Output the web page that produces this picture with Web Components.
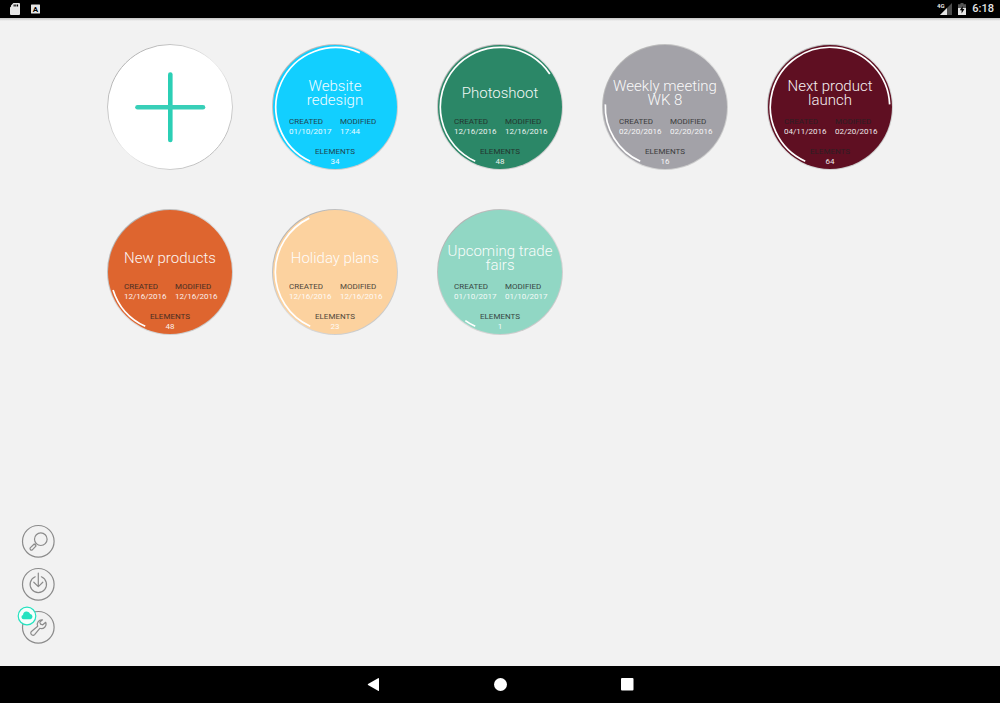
<!DOCTYPE html>
<html lang="en">
<head>
<meta charset="utf-8">
<meta name="viewport" content="width=device-width, initial-scale=1">
<title>Boards</title>
<style>
    body {
        margin: 0;
        background: #f1f1f1;
        font-family: Roboto, sans-serif;
    }
</style>
</head>
<body>
<board-app>
    <status-bar slot="status" time="6:18"></status-bar>
    <tool-bar slot="tools"></tool-bar>
    <add-board></add-board>
    <board-card color="#12cfff" arc="180" created="01/10/2017" modified="17:44" elements="34">Website redesign</board-card>
    <board-card color="#2b8767" arc="212" created="12/16/2016" modified="12/16/2016" elements="48">Photoshoot</board-card>
    <board-card color="#a3a2a8" arc="68" created="02/20/2016" modified="02/20/2016" elements="16">Weekly meeting WK 8</board-card>
    <board-card color="#5f0f22" arc="243" created="04/11/2016" modified="02/20/2016" elements="64">Next product launch</board-card>
    <board-card color="#de652f" arc="48" created="12/16/2016" modified="12/16/2016" elements="48">New products</board-card>
    <board-card color="#fcd29f" arc="130" created="12/16/2016" modified="12/16/2016" elements="23">Holiday plans</board-card>
    <board-card color="#91d7c4" arc="11" created="01/10/2017" modified="01/10/2017" elements="1">Upcoming trade fairs</board-card>
    <nav-bar slot="nav"></nav-bar>
</board-app>

<script>
class BoardApp extends HTMLElement {
    constructor() {
        super();
        this.attachShadow({ mode: 'open' });
    }

    connectedCallback() {
        this.shadowRoot.innerHTML = `
            <style>
                :host {
                    display: flex;
                    flex-direction: column;
                    min-height: 100vh;
                }
                main {
                    flex: 1;
                    display: grid;
                    grid-template-columns: 107px 1fr;
                    background: linear-gradient(#c4c4c4, #f2f2f2 3px);
                }
                .boards {
                    display: grid;
                    grid-template-columns: repeat(auto-fill, 126px);
                    align-content: start;
                    gap: 39px;
                    padding: 26px 107px 26px 0;
                }
            </style>
            <slot name="status"></slot>
            <main>
                <slot name="tools"></slot>
                <div class="boards"><slot></slot></div>
            </main>
            <slot name="nav"></slot>
        `;
    }
}

class StatusBar extends HTMLElement {
    constructor() {
        super();
        this.attachShadow({ mode: 'open' });
    }

    connectedCallback() {
        const time = this.getAttribute('time') || '';

        this.shadowRoot.innerHTML = `
            <style>
                :host {
                    display: flex;
                    justify-content: space-between;
                    align-items: center;
                    height: 18px;
                    padding: 0 6px 0 10px;
                    background: #000;
                    color: #e6e6e6;
                }
                div {
                    display: flex;
                    align-items: center;
                }
                .left {
                    gap: 11px;
                }
                .right {
                    gap: 6px;
                }
                svg {
                    display: block;
                }
                .time {
                    font-size: 11px;
                    line-height: 18px;
                    font-weight: 500;
                }
            </style>
            <div class="left">
                <svg width="10" height="12" viewBox="0 0 10 12">
                    <path fill="#e6e6e6" d="M3.4 0H9q1 0 1 1v10q0 1-1 1H1q-1 0-1-1V4.500L1 3.500V2.600z"/>
                    <path fill="#000" d="M3.600 1.500h1.100v2H3.600zM5.300 1.500h1.100v2H5.300zM7 1.500h1.100v2H7z"/>
                </svg>
                <svg width="9" height="10" viewBox="0 0 9 10">
                    <rect width="9" height="9" y=".5" rx=".5" fill="#e6e6e6"/>
                    <text x="4.500" y="8" font-size="8" font-weight="700" text-anchor="middle">A</text>
                </svg>
            </div>
            <div class="right">
                <svg width="15" height="14" viewBox="0 0 15 14">
                    <path fill="#4c4c4c" d="M15 1v12H3z"/>
                    <path fill="#e6e6e6" d="M10 6v7H3z"/>
                    <text x="0" y="6" font-size="6" font-weight="700" fill="#e6e6e6">4G</text>
                </svg>
                <svg width="8" height="12" viewBox="0 0 8 12">
                    <path fill="#555" d="M2.500 0h3v1.200H8V6H0V1.200h2.500z"/>
                    <path fill="#e6e6e6" d="M0 5h8v7H0z"/>
                    <path fill="#000" d="M4.700 3 1.800 7.200h1.800V10.500L6.400 6H4.700z"/>
                </svg>
                <span class="time">${time}</span>
            </div>
        `;
    }
}

class AddBoard extends HTMLElement {
    constructor() {
        super();
        this.attachShadow({ mode: 'open' });
    }

    connectedCallback() {
        this.shadowRoot.innerHTML = `
            <style>
                :host {
                    display: block;
                }
                button {
                    display: block;
                    width: 100%;
                    aspect-ratio: 1;
                    padding: 0;
                    border: 0;
                    border-radius: 50%;
                    background: none;
                    cursor: pointer;
                }
                svg {
                    display: block;
                    width: 100%;
                }
            </style>
            <button type="button" aria-label="New board">
                <svg viewBox="0 0 126 126">
                    <defs>
                        <linearGradient id="rim" x1="0" y1="0" x2="1" y2="1">
                            <stop offset=".15" stop-color="#b4b4b4"/>
                            <stop offset=".5" stop-color="#ececec"/>
                            <stop offset=".85" stop-color="#c0c0c0"/>
                        </linearGradient>
                    </defs>
                    <circle cx="63" cy="63" r="62.500" fill="#fff" stroke="url(#rim)"/>
                    <path d="M63.300 30.500v65.500" stroke="#2bcfb5" stroke-width="4.600" stroke-linecap="round"/>
                    <path d="M30.500 63.300h65.500" stroke="#38cfb8" stroke-width="4.600" stroke-linecap="round"/>
                </svg>
            </button>
        `;
    }
}

// Every progress arc starts at the lower left and runs clockwise.
const ARC_START = 204.5;
const ARC_RADIUS = 59.7;

function arcPoint(deg) {
    const rad = deg * Math.PI / 180;
    const x = 63 + ARC_RADIUS * Math.sin(rad);
    const y = 63 - ARC_RADIUS * Math.cos(rad);
    return `${x.toFixed(2)} ${y.toFixed(2)}`;
}

class BoardCard extends HTMLElement {
    constructor() {
        super();
        this.attachShadow({ mode: 'open' });
    }

    connectedCallback() {
        const color = this.getAttribute('color') || '#999';
        const arc = Number(this.getAttribute('arc')) || 0;
        const created = this.getAttribute('created') || '';
        const modified = this.getAttribute('modified') || '';
        const elements = this.getAttribute('elements') || '';
        const large = arc > 180 ? 1 : 0;

        this.shadowRoot.innerHTML = `
            <style>
                :host {
                    display: block;
                }
                a {
                    display: grid;
                    aspect-ratio: 1;
                    border-radius: 50%;
                    color: #fff;
                    text-decoration: none;
                    text-align: center;
                    font-weight: 300;
                }
                svg, .content {
                    grid-area: 1 / 1;
                    min-width: 0;
                }
                svg {
                    display: block;
                    width: 100%;
                }
                .content {
                    display: flex;
                    flex-direction: column;
                    align-items: center;
                    padding-top: 31px;
                }
                .title {
                    display: flex;
                    flex-direction: column;
                    justify-content: center;
                    width: 108px;
                    height: 35px;
                    font-size: 15px;
                    line-height: 14px;
                    opacity: .94;
                }
                dl, dt, dd {
                    margin: 0;
                }
                dl {
                    display: grid;
                    grid-template-columns: 51px 45px;
                    row-gap: 10px;
                    margin-top: 7px;
                    padding-left: 4px;
                    font-size: 8px;
                    line-height: 10px;
                    font-weight: 400;
                    text-align: left;
                    white-space: nowrap;
                }
                dt {
                    color: #222;
                    opacity: .8;
                }
                dd {
                    opacity: .9;
                }
                .total {
                    grid-column: 1 / -1;
                    margin-right: 4px;
                    text-align: center;
                }
            </style>
            <a href="#">
                <svg viewBox="0 0 126 126" aria-hidden="true">
                    <defs>
                        <linearGradient id="rim" x1="0" y1="0" x2="1" y2="1">
                            <stop offset=".15" stop-color="#b4b4b4"/>
                            <stop offset=".5" stop-color="#dedede"/>
                            <stop offset=".85" stop-color="#cacaca"/>
                        </linearGradient>
                    </defs>
                    <circle cx="63" cy="63" r="63" fill="url(#rim)"/>
                    <circle cx="63" cy="63" r="62" fill="${color}"/>
                    <path d="M${arcPoint(ARC_START)}A${ARC_RADIUS} ${ARC_RADIUS} 0 ${large} 1 ${arcPoint(ARC_START + arc)}"
                        fill="none" stroke="#fff" stroke-width="1.700"/>
                </svg>
                <div class="content">
                    <div class="title"><span><slot></slot></span></div>
                    <dl>
                        <div><dt>CREATED</dt><dd>${created}</dd></div>
                        <div><dt>MODIFIED</dt><dd>${modified}</dd></div>
                        <div class="total"><dt>ELEMENTS</dt><dd>${elements}</dd></div>
                    </dl>
                </div>
            </a>
        `;
    }
}

class ToolBar extends HTMLElement {
    constructor() {
        super();
        this.attachShadow({ mode: 'open' });
    }

    connectedCallback() {
        this.shadowRoot.innerHTML = `
            <style>
                :host {
                    display: flex;
                    flex-direction: column;
                    justify-content: flex-end;
                    gap: 9px;
                    padding: 0 0 22px 21px;
                }
                button {
                    position: relative;
                    width: 34px;
                    height: 34px;
                    padding: 0;
                    border: 0;
                    border-radius: 50%;
                    background: none;
                    cursor: pointer;
                }
                svg {
                    display: block;
                    fill: none;
                    stroke: #8b8b8b;
                    stroke-width: 1.2;
                    stroke-linecap: round;
                    stroke-linejoin: round;
                }
                .badge {
                    position: absolute;
                    left: -4px;
                    top: -4px;
                }
            </style>
            <button type="button" aria-label="Search">
                <svg width="34" height="34" viewBox="0 0 34 34">
                    <circle cx="17.300" cy="17.300" r="15.800"/>
                    <circle cx="19.800" cy="15.200" r="6.300"/>
                    <path d="M15.200 19.700 14.200 20.700M13.200 20l1.900 1.900-3.800 4a1.500 1.500 0 0 1-2.100-2z"/>
                </svg>
            </button>
            <button type="button" aria-label="Import">
                <svg width="34" height="34" viewBox="0 0 34 34">
                    <circle cx="17.300" cy="17.300" r="15.800"/>
                    <path d="M14.200 9.800a8.200 8.200 0 1 0 6.200 0M17.300 6v13.500M12.800 15.200l4.500 4.400 4.500-4.400"/>
                </svg>
            </button>
            <button type="button" aria-label="Settings">
                <svg width="34" height="34" viewBox="0 0 34 34">
                    <circle cx="17.300" cy="17.300" r="15.800"/>
                    <path d="M21.500 9.800a4.600 4.600 0 0 0-4.800 6.500l-6.300 5.200a2.200 2.200 0 1 0 3.200 3.100l5.200-6.300a4.600 4.600 0 0 0 5.900-6l-2.900 2.500-2.200-.6-.8-2.100z"/>
                </svg>
                <svg class="badge" width="20" height="20" viewBox="0 0 20 20">
                    <circle cx="10" cy="10" r="8.800" style="fill: #f5fffc; stroke: #25e2c0"/>
                    <path style="fill: #25e2c0; stroke: none" d="M6.500 13.200a2.200 2.200 0 0 1-.5-4.300 3.700 3.700 0 0 1 7.200-.8 2.600 2.600 0 0 1 .3 5.100z"/>
                </svg>
            </button>
        `;
    }
}

class NavBar extends HTMLElement {
    constructor() {
        super();
        this.attachShadow({ mode: 'open' });
    }

    connectedCallback() {
        this.shadowRoot.innerHTML = `
            <style>
                :host {
                    display: block;
                    background: #000;
                }
                nav {
                    display: flex;
                    justify-content: center;
                }
                button {
                    display: flex;
                    justify-content: center;
                    align-items: center;
                    width: 127px;
                    height: 37px;
                    padding: 0;
                    border: 0;
                    background: none;
                    cursor: pointer;
                }
                svg {
                    fill: #fff;
                }
            </style>
            <nav>
                <button type="button" aria-label="Back">
                    <svg width="13" height="13" viewBox="0 0 13 13"><path d="M11.500 0q.5 0 .5.500v12q0 .5-.5.500L1 7q-.5-.5 0-1z"/></svg>
                </button>
                <button type="button" aria-label="Home">
                    <svg width="13" height="13" viewBox="0 0 13 13"><circle cx="6.500" cy="6.500" r="6.500"/></svg>
                </button>
                <button type="button" aria-label="Recent apps">
                    <svg width="13" height="13" viewBox="0 0 13 13"><rect width="12.500" height="12.500" rx="1"/></svg>
                </button>
            </nav>
        `;
    }
}

customElements.define('board-app', BoardApp);
customElements.define('status-bar', StatusBar);
customElements.define('add-board', AddBoard);
customElements.define('board-card', BoardCard);
customElements.define('tool-bar', ToolBar);
customElements.define('nav-bar', NavBar);
</script>
</body>
</html>
